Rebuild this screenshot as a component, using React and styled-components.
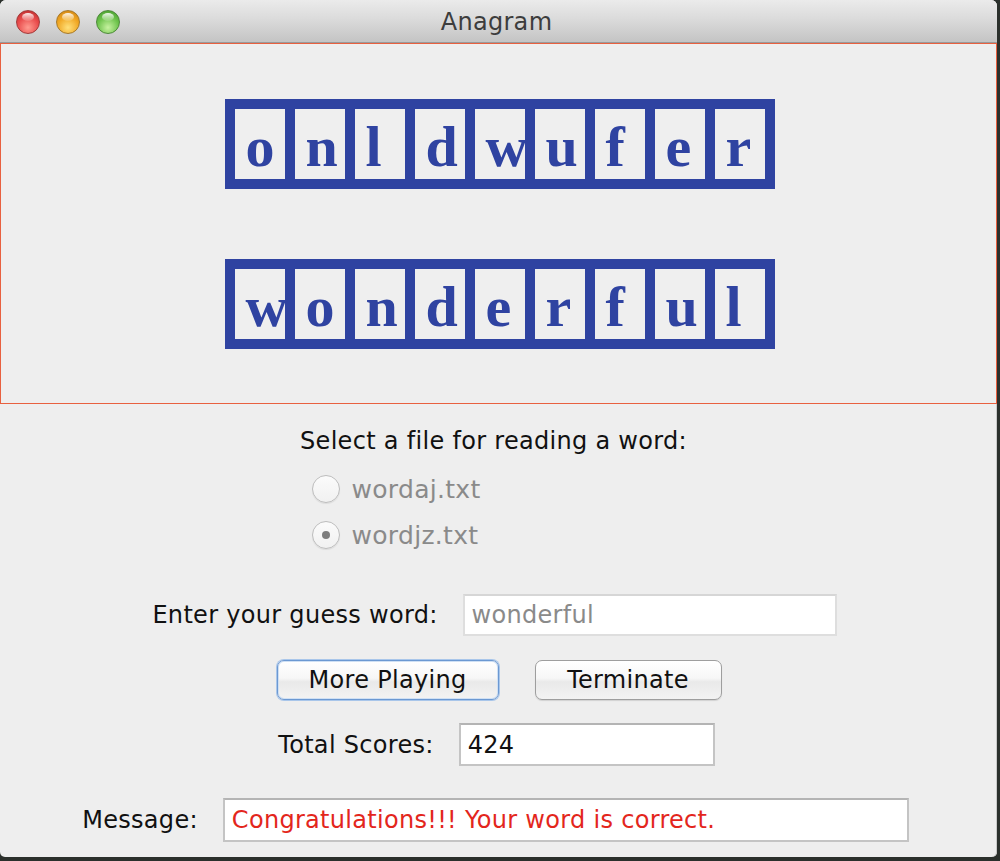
import React from "react";
import styled, { createGlobalStyle } from "styled-components";

const Global = createGlobalStyle`
  html, body { margin: 0; padding: 0; }
  body {
    background: #2b302c;
    width: 1000px;
    height: 861px;
    overflow: hidden;
    font-family: "DejaVu Sans", "Liberation Sans", sans-serif;
  }
`;

const Window = styled.div`
  width: 997px;
  height: 857px;
  background: #eeeeee;
  border-radius: 6px 6px 5px 5px;
  overflow: hidden;
  display: flex;
  flex-direction: column;
  box-shadow: inset -1px 0 0 #c9c9c9;
`;

const TitleBar = styled.div`
  height: 43px;
  flex: none;
  position: relative;
  display: flex;
  align-items: center;
  justify-content: center;
  background: linear-gradient(#ebebeb, #d9d9d9 50%, #c4c4c4);
  border-bottom: 1px solid #9a9a9a;
  box-sizing: border-box;
`;

const Lights = styled.div`
  position: absolute;
  left: 16px;
  top: 10px;
  display: flex;
  gap: 16px;
`;

const Light = styled.span`
  width: 24px;
  height: 24px;
  border-radius: 50%;
  box-sizing: border-box;
  border: 1px solid ${(p) => p.$edge};
  background: radial-gradient(circle at 50% 75%, ${(p) => p.$glow} 0%, ${(p) => p.$base} 55%, ${(p) => p.$dark} 100%);
  position: relative;
  &::after {
    content: "";
    position: absolute;
    left: 5px;
    top: 2px;
    width: 12px;
    height: 8px;
    border-radius: 50%;
    background: linear-gradient(rgba(255,255,255,0.9), rgba(255,255,255,0.1));
  }
`;

const Title = styled.div`
  font-size: 24px;
  color: #3d3d3d;
  letter-spacing: 0.3px;
  margin-left: -4px;
  margin-top: 2px;
`;

const BoardPanel = styled.div`
  flex: none;
  height: 361px;
  box-sizing: border-box;
  border: 1px solid #e8603f;
  display: flex;
  flex-direction: column;
  align-items: center;
  padding-top: 55px;
  gap: 70px;
`;

const WordRow = styled.div`
  display: flex;
  gap: 10px;
  padding: 10px;
  background: #2f43a1;
  margin-left: 2px;
`;

const Cell = styled.div`
  width: 50px;
  height: 70px;
  box-sizing: border-box;
  background: #efefef;
  padding: 9px 0 0 11px;
  font-family: "Liberation Serif", "Times New Roman", serif;
  font-weight: bold;
  font-size: 58px;
  line-height: 1;
  color: #2f43a1;
  white-space: nowrap;
  position: relative;
  z-index: 1;
  &:first-child { z-index: 2; }
`;

const Controls = styled.div`
  flex: 1;
  display: flex;
  flex-direction: column;
  align-items: center;
  font-size: 24px;
  letter-spacing: 0.3px;
  color: #111;
`;

const Prompt = styled.div`
  line-height: 28px;
  margin-top: 23px;
  margin-left: -10px;
  width: 390px;
  text-align: center;
`;

const RadioGroup = styled.div`
  width: 390px;
  margin-left: -10px;
  margin-top: 11px;
  display: flex;
  flex-direction: column;
  padding-left: 13px;
  box-sizing: border-box;
`;

const RadioRow = styled.label`
  height: 46px;
  display: flex;
  align-items: center;
  gap: 12px;
  color: #8a8a8a;
  font-size: 25px;
`;

const RadioCircle = styled.span`
  width: 28px;
  height: 28px;
  box-sizing: border-box;
  border-radius: 50%;
  border: 1px solid #bdbdbd;
  background: linear-gradient(#fbfbfb, #f1f1f1);
  box-shadow: 0 1px 1px rgba(0,0,0,0.08);
  display: flex;
  align-items: center;
  justify-content: center;
  &::after {
    content: "";
    width: 8px;
    height: 8px;
    border-radius: 50%;
    background: #7d7d7d;
    display: ${(p) => (p.$checked ? "block" : "none")};
  }
`;

const FieldRow = styled.div`
  display: flex;
  align-items: center;
  gap: 25px;
  margin-top: ${(p) => p.$top}px;
  margin-left: ${(p) => p.$shift || 0}px;
`;

const Field = styled.div`
  width: ${(p) => p.$w}px;
  height: ${(p) => p.$h}px;
  box-sizing: border-box;
  background: #fff;
  border: 2px solid ${(p) => (p.$soft ? "#dedede" : "#c4c4c4")};
  border-top-color: ${(p) => (p.$soft ? "#d6d6d6" : "#b4b4b4")};
  display: flex;
  align-items: center;
  padding-left: 7px;
  color: ${(p) => p.$color || "#111"};
  white-space: nowrap;
`;

const ButtonRow = styled.div`
  display: flex;
  gap: 36px;
  margin-top: 24px;
  margin-left: 1px;
`;

const Button = styled.button`
  width: ${(p) => p.$w}px;
  height: 40px;
  box-sizing: border-box;
  border-radius: 7px;
  border: 1px solid ${(p) => (p.$focus ? "#6b98d2" : "#9e9e9e")};
  box-shadow: ${(p) =>
    p.$focus ? "0 0 0 1px #a9c6ea, inset 0 0 0 1px #cfe0f4" : "0 1px 1px rgba(0,0,0,0.12)"};
  background: linear-gradient(#ffffff, #f7f7f7 45%, #e9e9e9 55%, #f3f3f3);
  font-family: inherit;
  font-size: 24px;
  letter-spacing: 0.3px;
  color: #111;
  padding: 0;
  line-height: 1;
`;

export default function App() {
  const top = "onldwufer".split("");
  const bottom = "wonderful".split("");
  return (
    <>
      <Global />
      <Window>
        <TitleBar>
          <Lights>
            <Light $base="#e84a4a" $glow="#ff9a8f" $dark="#b32626" $edge="#a23b3b" />
            <Light $base="#f0a622" $glow="#ffe07a" $dark="#c77c10" $edge="#a77a2a" />
            <Light $base="#6cc24a" $glow="#c7f2a0" $dark="#3f962a" $edge="#4e8a3a" />
          </Lights>
          <Title>Anagram</Title>
        </TitleBar>
        <BoardPanel>
          <WordRow>
            {top.map((c, i) => (
              <Cell key={i}>{c}</Cell>
            ))}
          </WordRow>
          <WordRow>
            {bottom.map((c, i) => (
              <Cell key={i}>{c}</Cell>
            ))}
          </WordRow>
        </BoardPanel>
        <Controls>
          <Prompt>Select a file for reading a word:</Prompt>
          <RadioGroup>
            <RadioRow>
              <RadioCircle />
              wordaj.txt
            </RadioRow>
            <RadioRow>
              <RadioCircle $checked />
              wordjz.txt
            </RadioRow>
          </RadioGroup>
          <FieldRow $top={36} $shift={-8}>
            <span>Enter your guess word:</span>
            <Field $w={374} $h={42} $soft $color="#8a8a8a">wonderful</Field>
          </FieldRow>
          <ButtonRow>
            <Button $w={222} $focus>More Playing</Button>
            <Button $w={187}>Terminate</Button>
          </ButtonRow>
          <FieldRow $top={23} $shift={-4}>
            <span>Total Scores:</span>
            <Field $w={256} $h={43}>424</Field>
          </FieldRow>
          <FieldRow $top={32} $shift={-6}>
            <span>Message:</span>
            <Field $w={686} $h={44} $color="#e3261c">
              Congratulations!!! Your word is correct.
            </Field>
          </FieldRow>
        </Controls>
      </Window>
    </>
  );
}
